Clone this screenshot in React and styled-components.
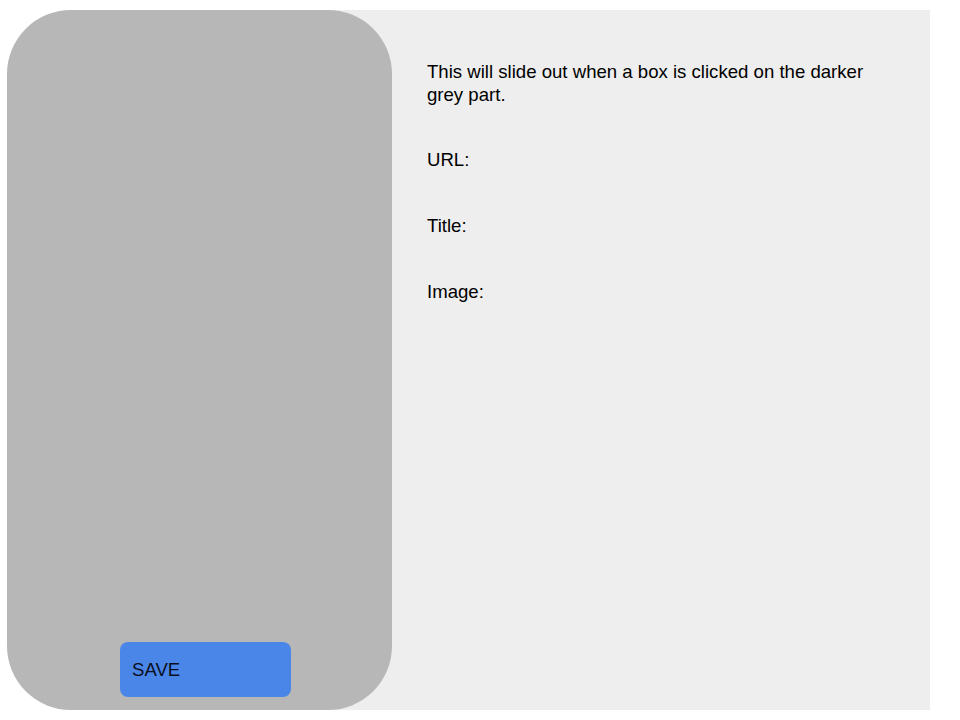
import styled, { createGlobalStyle } from "styled-components";

const GlobalStyle = createGlobalStyle`
    body {
        margin: 0;
        background: #ffffff;
        font-family: "Liberation Sans", Arial, sans-serif;
    }
`;

export default function App() {
    return (
        <>
            <GlobalStyle />
            <Layout>
                <Sidebar>
                    <SaveButton>SAVE</SaveButton>
                </Sidebar>
                <Details>
                    <Intro>This will slide out when a box is clicked on the darker grey part.</Intro>
                    <Field>URL:</Field>
                    <Field>Title:</Field>
                    <Field>Image:</Field>
                </Details>
            </Layout>
        </>
    );
}

const Layout = styled.div`
    display: flex;
    width: 923px;
    height: 700px;
    margin: 10px 0 0 7px;
    background: linear-gradient(to right, transparent 200px, #eeeeee 200px);
`;

const Sidebar = styled.div`
    display: flex;
    flex-direction: column;
    justify-content: flex-end;
    width: 385px;
    flex-shrink: 0;
    box-sizing: border-box;
    padding: 0 0 13px 113px;
    background: #b7b7b7;
    border-radius: 64px;
`;

const SaveButton = styled.div`
    display: flex;
    align-items: center;
    width: 171px;
    height: 55px;
    box-sizing: border-box;
    padding-left: 12px;
    background: #4a86e8;
    border-radius: 8px;
    color: #0a0f1e;
    font-size: 18.6px;
    cursor: pointer;
`;

const Details = styled.div`
    flex: 1;
    padding: 50px 0 0 35px;
    color: #000;
    font-size: 18.6px;
    line-height: 23px;
`;

const Intro = styled.p`
    width: 470px;
    margin: 0 0 42px;
`;

const Field = styled.p`
    margin: 0 0 43px;
`;
